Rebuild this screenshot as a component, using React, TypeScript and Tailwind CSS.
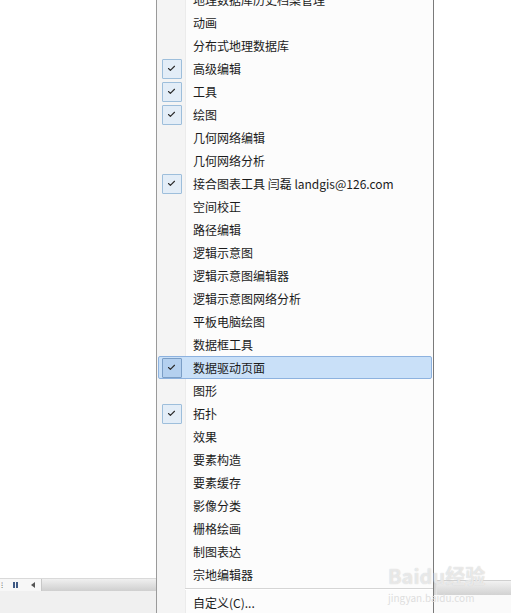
import { Check } from 'lucide-react';

type Item = { label: string; checked?: boolean; active?: boolean };

const items: Item[] = [
  { label: '地理数据库历史档案管理' },
  { label: '动画' },
  { label: '分布式地理数据库' },
  { label: '高级编辑', checked: true },
  { label: '工具', checked: true },
  { label: '绘图', checked: true },
  { label: '几何网络编辑' },
  { label: '几何网络分析' },
  { label: '接合图表工具 闫磊 landgis@126.com', checked: true },
  { label: '空间校正' },
  { label: '路径编辑' },
  { label: '逻辑示意图' },
  { label: '逻辑示意图编辑器' },
  { label: '逻辑示意图网络分析' },
  { label: '平板电脑绘图' },
  { label: '数据框工具' },
  { label: '数据驱动页面', checked: true, active: true },
  { label: '图形' },
  { label: '拓扑', checked: true },
  { label: '效果' },
  { label: '要素构造' },
  { label: '要素缓存' },
  { label: '影像分类' },
  { label: '栅格绘画' },
  { label: '制图表达' },
  { label: '宗地编辑器' },
];

const MenuRow = ({ item }: { item: Item }) => (
  <div
    className={
      'flex h-[23px] items-center mx-[1px] rounded-[2px] border ' +
      (item.active ? 'bg-[#c9e0f8] border-[#8db2df]' : 'border-transparent')
    }
  >
    <div className="flex w-[25px] shrink-0 justify-center">
      {item.checked && (
        <div
          className={
            'flex h-[20px] w-[20px] items-center justify-center rounded-[1px] border ' +
            (item.active
              ? 'border-[#7b9ec6] bg-[#b4d0ef]'
              : 'border-[#9dbedb] bg-[#e3edf7]')
          }
        >
          <Check size={9} strokeWidth={3} className="text-[#2b2b2b]" />
        </div>
      )}
    </div>
    <span className="pl-[9px] text-[12px] leading-none text-[#1b1b1b] whitespace-nowrap">
      {item.label}
    </span>
  </div>
);

const App = (): JSX.Element => {
  return (
    <div className="relative flex h-[613px] w-[511px] overflow-hidden bg-white font-['Segoe_UI','Noto_Sans_CJK_SC',sans-serif]">
      {/* left side: blank panel with scroll bar near the bottom */}
      <div className="flex w-[156px] shrink-0 flex-col">
        <div className="flex-1 bg-white" />
        <div className="flex h-[13px] items-center border-t border-[#d9d9d9] bg-[#f7f7f7]">
          <span className="w-[10px] pl-[1px] text-[8px] leading-none text-[#555]">⁝</span>
          <div className="ml-[3px] flex gap-[1px]">
            <div className="h-[6px] w-[2px] bg-[#3f5a84]" />
            <div className="h-[6px] w-[2px] bg-[#3f5a84]" />
          </div>
          <div className="ml-[13px] h-0 w-0 border-y-[3px] border-r-[4px] border-y-transparent border-r-[#555]" />
          <div className="ml-[6px] h-full w-[1px] bg-[#c8c8c8]" />
          <div className="h-full flex-1 bg-gradient-to-b from-[#f0f0f0] to-[#cfcfcf]" />
        </div>
        <div className="h-[22px] bg-[#f0f0f0]" />
      </div>

      {/* popup menu */}
      <div className="flex w-[278px] shrink-0 border-x border-l-[#9a9a9a] border-r-[#7a7a7a] bg-[#fcfcfc] shadow-[3px_0_3px_rgba(0,0,0,0.18)]">
        <div className="relative flex-1">
          <div className="absolute inset-y-0 left-0 w-[28px] bg-[#f4f4f4]" />
          <div className="absolute inset-y-0 left-[28px] w-[1px] bg-[#ebebeb]" />
          <div className="relative -mt-[12px] flex flex-col">
            {items.map((item) => (
              <MenuRow key={item.label} item={item} />
            ))}
            <div className="ml-[28px] mt-[2px] h-[2px] border-t border-[#d5d5d5] bg-white" />
            <div className="mt-[1px]">
              <MenuRow item={{ label: '自定义(C)...' }} />
            </div>
          </div>
        </div>
      </div>

      {/* right side */}
      <div className="flex flex-1 flex-col">
        <div className="flex-1 bg-white" />
        <div className="ml-[3px] h-[15px] border-t border-[#d0d0d0] bg-gradient-to-b from-[#f2f2f2] to-[#d2d2d2]" />
        <div className="h-[18px] bg-[#fafafa]" />
      </div>

      {/* watermark */}
      <div className="pointer-events-none absolute left-[388px] top-[566px] flex flex-col items-start gap-[7px]">
        <span className="text-[20px] leading-none font-bold text-white/60 [text-shadow:0_0_1px_#c4c4c4] whitespace-nowrap">
          Baidu经验
        </span>
        <span className="text-[10px] leading-none text-[#dedede] whitespace-nowrap">
          jingyan.baidu.com
        </span>
      </div>
    </div>
  );
};

export default App;
